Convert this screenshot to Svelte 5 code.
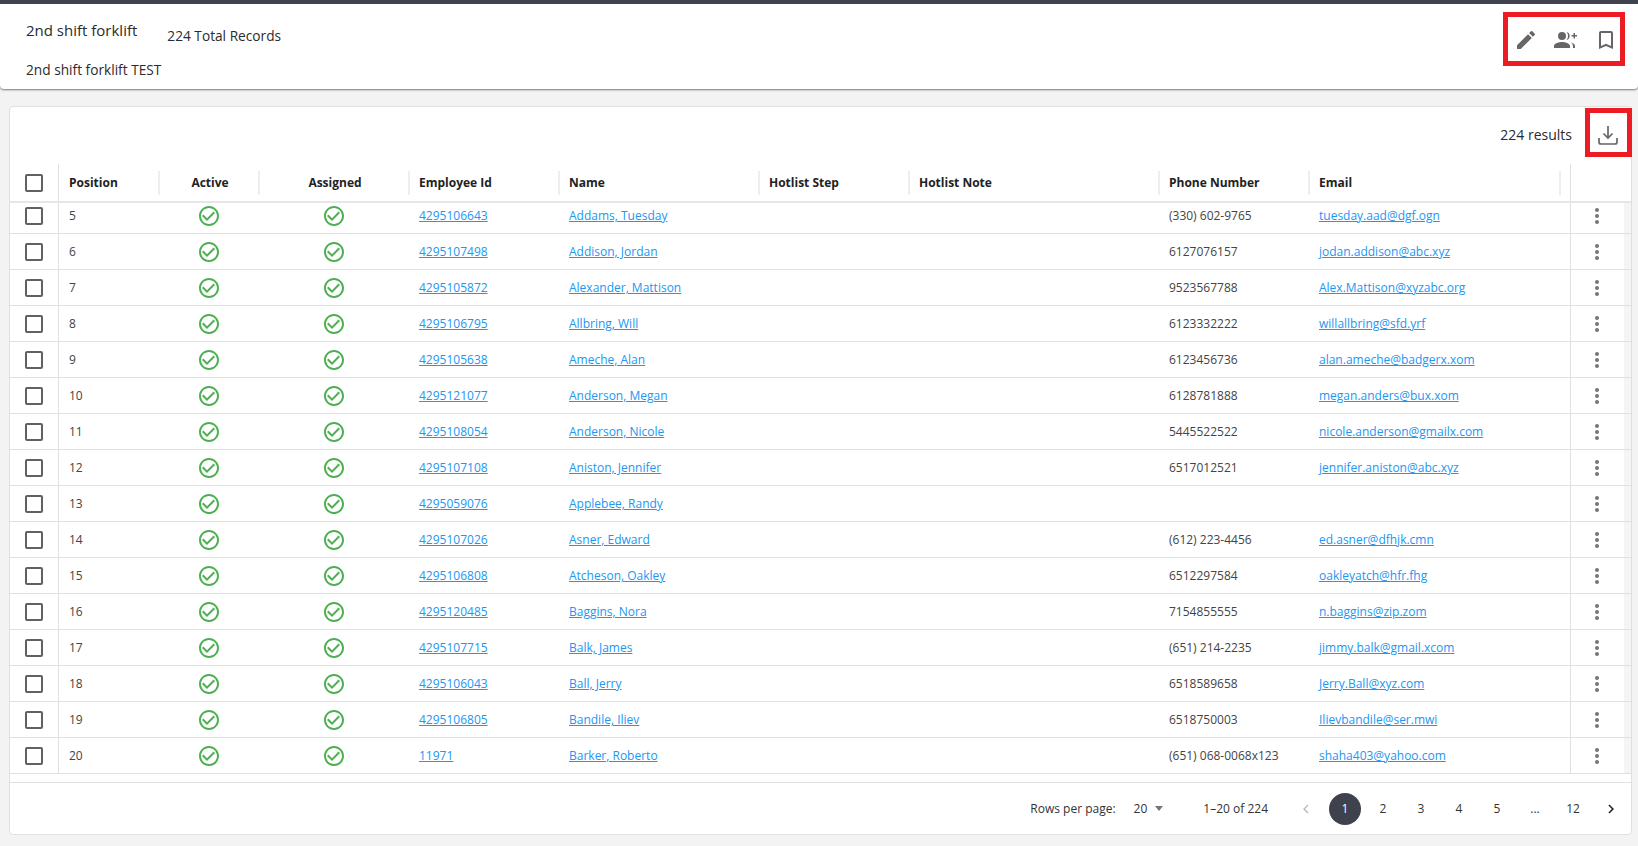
<script>
	const rows = [
		{ pos: 5, id: '4295106643', name: 'Addams, Tuesday', phone: '(330) 602-9765', email: 'tuesday.aad@dgf.ogn' },
		{ pos: 6, id: '4295107498', name: 'Addison, Jordan', phone: '6127076157', email: 'jodan.addison@abc.xyz' },
		{ pos: 7, id: '4295105872', name: 'Alexander, Mattison', phone: '9523567788', email: 'Alex.Mattison@xyzabc.org' },
		{ pos: 8, id: '4295106795', name: 'Allbring, Will', phone: '6123332222', email: 'willallbring@sfd.yrf' },
		{ pos: 9, id: '4295105638', name: 'Ameche, Alan', phone: '6123456736', email: 'alan.ameche@badgerx.xom' },
		{ pos: 10, id: '4295121077', name: 'Anderson, Megan', phone: '6128781888', email: 'megan.anders@bux.xom' },
		{ pos: 11, id: '4295108054', name: 'Anderson, Nicole', phone: '5445522522', email: 'nicole.anderson@gmailx.com' },
		{ pos: 12, id: '4295107108', name: 'Aniston, Jennifer', phone: '6517012521', email: 'jennifer.aniston@abc.xyz' },
		{ pos: 13, id: '4295059076', name: 'Applebee, Randy', phone: '', email: '' },
		{ pos: 14, id: '4295107026', name: 'Asner, Edward', phone: '(612) 223-4456', email: 'ed.asner@dfhjk.cmn' },
		{ pos: 15, id: '4295106808', name: 'Atcheson, Oakley', phone: '6512297584', email: 'oakleyatch@hfr.fhg' },
		{ pos: 16, id: '4295120485', name: 'Baggins, Nora', phone: '7154855555', email: 'n.baggins@zip.zom' },
		{ pos: 17, id: '4295107715', name: 'Balk, James', phone: '(651) 214-2235', email: 'jimmy.balk@gmail.xcom' },
		{ pos: 18, id: '4295106043', name: 'Ball, Jerry', phone: '6518589658', email: 'Jerry.Ball@xyz.com' },
		{ pos: 19, id: '4295106805', name: 'Bandile, Iliev', phone: '6518750003', email: 'Ilievbandile@ser.mwi' },
		{ pos: 20, id: '11971', name: 'Barker, Roberto', phone: '(651) 068-0068x123', email: 'shaha403@yahoo.com' }
	];

	const pages = ['1', '2', '3', '4', '5', '...', '12'];
</script>

{#snippet checkbox()}
	<svg class="box" viewBox="0 0 24 24" width="24" height="24">
		<path d="M19 5v14H5V5h14m0-2H5c-1.1 0-2 .9-2 2v14c0 1.1.9 2 2 2h14c1.1 0 2-.9 2-2V5c0-1.1-.9-2-2-2z" />
	</svg>
{/snippet}

{#snippet okIcon()}
	<svg class="ok" viewBox="0 0 24 24" width="24" height="24">
		<path d="M16.59 7.58 10 14.17l-3.59-3.58L5 12l5 5 8-8zM12 2C6.48 2 2 6.48 2 12s4.48 10 10 10 10-4.48 10-10S17.52 2 12 2zm0 18c-4.42 0-8-3.58-8-8s3.58-8 8-8 8 3.58 8 8-3.58 8-8 8z" />
	</svg>
{/snippet}

<div class="page">
	<header class="summary">
		<div class="titles">
			<div class="title-line">
				<span class="title">2nd shift forklift</span>
				<span class="total">224 Total Records</span>
			</div>
			<div class="subtitle">2nd shift forklift TEST</div>
		</div>
		<div class="actions">
			<svg viewBox="0 0 24 24" width="24" height="24">
				<path d="M3 17.25V21h3.75L17.81 9.94l-3.75-3.75L3 17.25zM20.71 7.04a1 1 0 0 0 0-1.41l-2.34-2.34a1 1 0 0 0-1.41 0l-1.83 1.83 3.75 3.75 1.83-1.83z" />
			</svg>
			<svg viewBox="0 0 24 24" width="24" height="24">
				<path d="M8 12a4 4 0 1 0 0-8 4 4 0 0 0 0 8zm0 2c-2.67 0-8 1.34-8 4v2h16v-2c0-2.66-5.33-4-8-4z" />
				<path d="M12.5 11.9a4 4 0 0 0 0-7.8c.95 1 1.5 2.4 1.5 3.9s-.55 2.9-1.5 3.9zM17 14.5c1.2.8 2 2 2 3.5v2h2v-2c0-1.8-1.9-3-4-3.5zM21 7V5h-1.5v2h-2v1.5h2v2H21v-2h2V7z" />
			</svg>
			<svg viewBox="0 0 24 24" width="24" height="24">
				<path d="M17 3H7c-1.1 0-2 .9-2 2v16l7-3 7 3V5c0-1.1-.9-2-2-2zm0 15l-5-2.18L7 18V5h10v13z" />
			</svg>
		</div>
	</header>

	<section class="card">
		<div class="toolbar">
			<span class="results">224 results</span>
			<button class="download" aria-label="Download">
				<svg viewBox="0 0 24 24" width="24" height="24">
					<path d="M12 3v12M7.5 10.5 12 15l4.5-4.5M3 15v4a2 2 0 0 0 2 2h14a2 2 0 0 0 2-2v-4" />
				</svg>
			</button>
		</div>

		<div class="row head">
			<div class="cell check">{@render checkbox()}</div>
			<div class="cell sep first">Position</div>
			<div class="cell sep center">Active</div>
			<div class="cell sep center">Assigned</div>
			<div class="cell sep">Employee Id</div>
			<div class="cell sep">Name</div>
			<div class="cell sep">Hotlist Step</div>
			<div class="cell sep">Hotlist Note</div>
			<div class="cell sep">Phone Number</div>
			<div class="cell sep">Email</div>
			<div class="cell"></div>
			<div class="cell more"></div>
			<div class="cell"></div>
		</div>

		<div class="body">
			{#each rows as r (r.pos)}
				<div class="row">
					<div class="cell check">{@render checkbox()}</div>
					<div class="cell first">{r.pos}</div>
					<div class="cell center">{@render okIcon()}</div>
					<div class="cell center">{@render okIcon()}</div>
					<div class="cell"><a href="#emp">{r.id}</a></div>
					<div class="cell"><a href="#emp">{r.name}</a></div>
					<div class="cell"></div>
					<div class="cell"></div>
					<div class="cell">{r.phone}</div>
					<div class="cell"><a href="#emp">{r.email}</a></div>
					<div class="cell"></div>
					<div class="cell more">
						<svg viewBox="0 0 24 24" width="24" height="24">
							<circle cx="12" cy="6" r="2" />
							<circle cx="12" cy="12" r="2" />
							<circle cx="12" cy="18" r="2" />
						</svg>
					</div>
					<div class="cell track"></div>
				</div>
			{/each}
		</div>

		<footer class="pager">
			<span class="rows-label">Rows per page:</span>
			<span class="rows-select">20<i class="caret"></i></span>
			<span class="range">1–20 of 224</span>
			<nav class="pages">
				<svg class="chev off" viewBox="0 0 24 24" width="18" height="18">
					<path d="M15.41 7.41 14 6l-6 6 6 6 1.41-1.41L10.83 12z" />
				</svg>
				{#each pages as p, i}
					<span class="pg" class:on={i === 0}>{p}</span>
				{/each}
				<svg class="chev" viewBox="0 0 24 24" width="18" height="18">
					<path d="M10 6 8.59 7.41 13.17 12l-4.58 4.59L10 18l6-6z" />
				</svg>
			</nav>
		</footer>
	</section>

	<!-- red annotation boxes drawn over the screenshot -->
	<div class="mark mark-top"></div>
	<div class="mark mark-dl"></div>
</div>

<style>
	:global(body) {
		margin: 0;
		background: #f3f3f3;
	}

	.page {
		position: relative;
		height: 846px;
		overflow: hidden;
		box-sizing: border-box;
		border-top: 4px solid #3f414d;
		background: #f3f3f3;
		font-family: 'Open Sans', sans-serif;
		font-size: 12px;
		color: #444;
	}

	.summary {
		height: 85px;
		box-sizing: border-box;
		display: flex;
		justify-content: space-between;
		background: #fff;
		border-radius: 0 0 4px 4px;
		box-shadow: 0 1px 2px rgba(0, 0, 0, 0.5);
		padding: 0 20px 0 26px;
	}

	.titles {
		display: flex;
		flex-direction: column;
		color: #2b2b2b;
	}

	.title-line {
		display: flex;
		align-items: flex-end;
		gap: 30px;
		height: 43px;
	}

	.title {
		font-size: 15px;
		line-height: 20px;
		margin-bottom: 7px;
	}

	.total {
		font-size: 13.7px;
		line-height: 20px;
		margin-bottom: 1px;
	}

	.subtitle {
		font-size: 13.7px;
		line-height: 20px;
		margin-top: 13px;
	}

	.actions {
		display: flex;
		gap: 16px;
		padding-top: 24px;
	}

	.actions svg {
		fill: #666;
	}

	.card {
		margin: 17px 6px 0 9px;
		height: 729px;
		box-sizing: border-box;
		background: #fff;
		border: 1px solid #e0e0e0;
		border-radius: 4px;
		display: flex;
		flex-direction: column;
	}

	.toolbar {
		height: 57px;
		flex: none;
		box-sizing: border-box;
		display: flex;
		align-items: center;
		justify-content: flex-end;
		padding: 0 11px 3px 0;
		gap: 24px;
	}

	.results {
		font-size: 14px;
		color: #2b2b2b;
		font-weight: 500;
	}

	.download {
		border: 0;
		padding: 0;
		margin-top: 2px;
		background: none;
		display: flex;
	}

	.download svg {
		fill: none;
		stroke: #666;
		stroke-width: 1.7;
	}

	.row {
		display: grid;
		grid-template-columns: 49px 101px 100px 150px 150px 200px 150px 250px 150px 251px 9px 54px 7px;
		height: 36px;
		box-sizing: border-box;
		border-bottom: 1px solid #e0e0e0;
	}

	.head {
		height: 39px;
		flex: none;
		border-bottom-width: 2px;
		border-bottom-color: #e6e6e6;
		font-weight: 700;
		color: #222;
	}

	.cell {
		display: flex;
		align-items: center;
		padding-left: 9px;
		min-width: 0;
		white-space: nowrap;
	}

	.first {
		padding-left: 10px;
	}

	.center {
		justify-content: center;
		padding-left: 0;
	}

	/* the icons sit a px left of the column titles */
	.body .center {
		padding-right: 2px;
	}

	.check {
		justify-content: center;
		padding-left: 0;
		border-right: 1px solid #e0e0e0;
		box-sizing: border-box;
	}

	.more {
		justify-content: center;
		padding-left: 0;
		padding-right: 1px;
		border-left: 1px solid #e0e0e0;
	}

	/* small divider at the right of each column title */
	.sep {
		background: linear-gradient(#eee, #eee) no-repeat right center / 2px 24px;
	}

	.track {
		background: #f5f5f5;
		padding: 0;
	}

	.body {
		flex: 1;
		overflow: hidden;
	}

	/* list is scrolled a few px, so the first row is cut */
	.body .row:first-child {
		margin-top: -5px;
	}

	.box {
		fill: #616161;
	}

	.ok {
		fill: #4caf50;
	}

	.more svg {
		fill: #757575;
	}

	a {
		color: #2196f3;
		text-decoration: underline;
	}

	.pager {
		flex: none;
		height: 52px;
		box-sizing: border-box;
		border-top: 1px solid #e0e0e0;
		display: flex;
		align-items: center;
		justify-content: flex-end;
		padding-right: 4px;
		color: #333;
	}

	.rows-select {
		display: flex;
		align-items: center;
		margin-left: 18px;
		gap: 8px;
	}

	.caret {
		width: 0;
		height: 0;
		border-left: 4.5px solid transparent;
		border-right: 4.5px solid transparent;
		border-top: 5px solid #757575;
	}

	.range {
		margin: 0 22px 0 40px;
	}

	.pages {
		display: flex;
		align-items: center;
		gap: 6px;
	}

	.pg {
		width: 32px;
		height: 32px;
		border-radius: 50%;
		display: flex;
		align-items: center;
		justify-content: center;
	}

	.pg.on {
		background: #3f414d;
		color: #fff;
	}

	.chev {
		fill: #222;
		margin: 0 7px;
	}

	.chev.off {
		fill: #bdbdbd;
		margin: 0 8px 0 7px;
	}

	.mark {
		position: absolute;
		box-sizing: border-box;
		border: 5px solid #ed1c24;
	}

	.mark-top {
		left: 1503px;
		top: 8px;
		width: 122px;
		height: 54px;
	}

	.mark-dl {
		left: 1585px;
		top: 104px;
		width: 47px;
		height: 49px;
	}
</style>
